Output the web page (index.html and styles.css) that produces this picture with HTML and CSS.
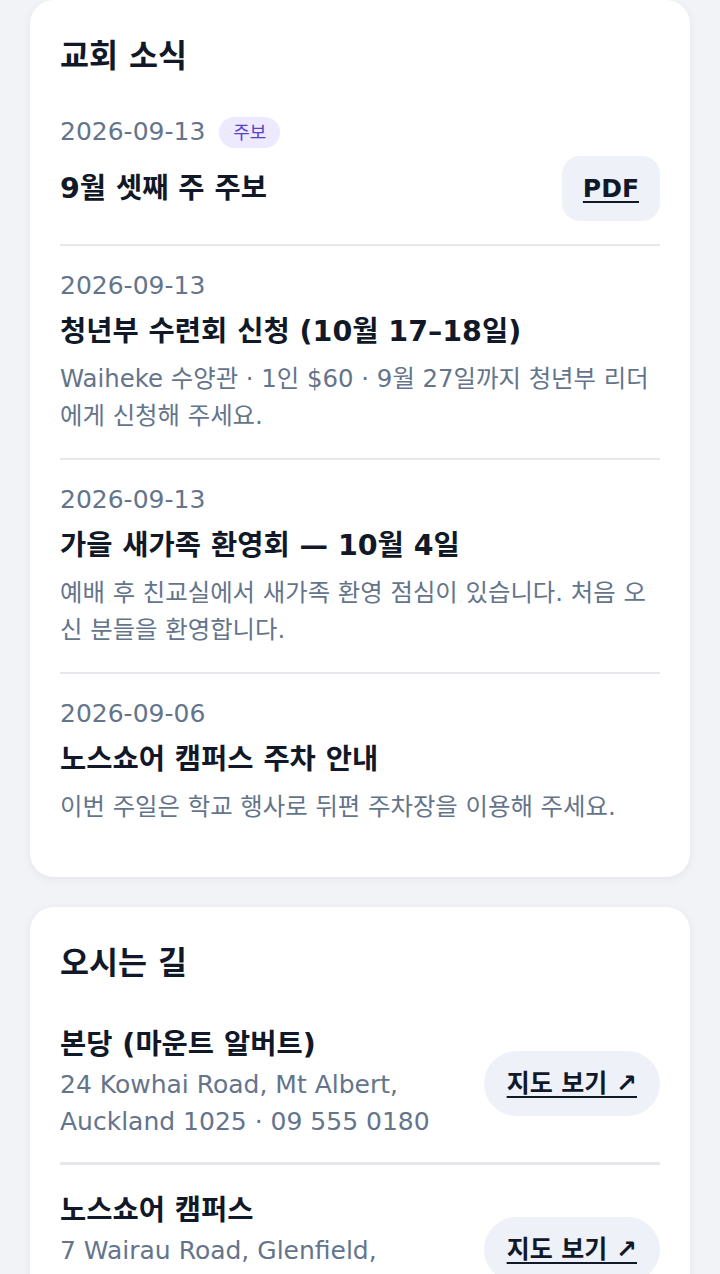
FILE: index.html
```html
<!DOCTYPE html>
<html lang="ko">
<head>
  <meta charset="UTF-8" />
  <title>교회 소식</title>
  <link rel="stylesheet" href="styles.css">
</head>
<body>
  <main class="page">
    <section class="card">
      <h2 class="card-title">교회 소식</h2>
      <ul class="news">
        <li class="news-item">
          <div class="news-meta">
            <span class="date">2026-09-13</span>
            <span class="tag">주보</span>
          </div>
          <div class="news-row">
            <h3 class="news-title">9월 셋째 주 주보</h3>
            <a class="btn" href="#">PDF</a>
          </div>
        </li>
        <li class="news-item">
          <div class="news-meta"><span class="date">2026-09-13</span></div>
          <h3 class="news-title">청년부 수련회 신청 (10월 17–18일)</h3>
          <p class="news-text">Waiheke 수양관 · 1인 $60 · 9월 27일까지 청년부 리더에게 신청해 주세요.</p>
        </li>
        <li class="news-item">
          <div class="news-meta"><span class="date">2026-09-13</span></div>
          <h3 class="news-title">가을 새가족 환영회 — 10월 4일</h3>
          <p class="news-text">예배 후 친교실에서 새가족 환영 점심이 있습니다. 처음 오신 분들을 환영합니다.</p>
        </li>
        <li class="news-item">
          <div class="news-meta"><span class="date">2026-09-06</span></div>
          <h3 class="news-title">노스쇼어 캠퍼스 주차 안내</h3>
          <p class="news-text">이번 주일은 학교 행사로 뒤편 주차장을 이용해 주세요.</p>
        </li>
      </ul>
    </section>

    <section class="card">
      <h2 class="card-title">오시는 길</h2>
      <ul class="places">
        <li class="place">
          <div class="place-info">
            <h3 class="place-name">본당 (마운트 알버트)</h3>
            <p class="place-addr">24 Kowhai Road, Mt Albert, Auckland 1025 · 09 555 0180</p>
          </div>
          <a class="btn btn-pill" href="#">지도 보기 ↗</a>
        </li>
        <li class="place">
          <div class="place-info">
            <h3 class="place-name">노스쇼어 캠퍼스</h3>
            <p class="place-addr">7 Wairau Road, Glenfield, Auckland 0629 · 09 555 0420</p>
          </div>
          <a class="btn btn-pill" href="#">지도 보기 ↗</a>
        </li>
      </ul>
    </section>
  </main>
</body>
</html>
```

FILE: styles.css
```css
body {
  margin: 0;
  background: #f1f3f7;
  font-family: "DejaVu Sans", "Noto Sans CJK KR", sans-serif;
  color: #111827;
}

.page {
  padding: 0 30px 30px;
  display: flex;
  flex-direction: column;
  gap: 30px;
}

.card {
  background: #fff;
  border-radius: 24px;
  padding: 34px 30px 28px;
  box-shadow: 0 2px 10px rgba(15, 23, 42, 0.06);
}

.card-title {
  margin: 0 0 14px;
  font-size: 31.5px;
  line-height: 44px;
  font-weight: 700;
}

ul {
  list-style: none;
  margin: 0;
  padding: 0;
}

.news-item {
  padding: 22px 0 24px;
  border-bottom: 2px solid #e5e7eb;
}

.news-item:first-child {
  padding-bottom: 23px;
}

.news-item:last-child {
  border-bottom: none;
}

.news-meta {
  display: flex;
  align-items: center;
  gap: 14px;
}

.date {
  font-size: 25px;
  line-height: 36px;
  color: #64748b;
}

.tag {
  background: #ede9fe;
  color: #5b3fc4;
  font-size: 18px;
  line-height: 31px;
  padding: 0 14px;
  border-radius: 16px;
}

.news-row {
  display: flex;
  justify-content: space-between;
  align-items: center;
  margin-top: 6px;
}

.news-title {
  margin: 10px 0 0;
  font-size: 28.5px;
  line-height: 36px;
  font-weight: 700;
}

.news-row .news-title {
  margin: 0;
}

.news-text {
  margin: 10px 0 0;
  font-size: 24.4px;
  line-height: 37px;
  color: #64748b;
}

.btn {
  flex: none;
  background: #eef1f7;
  color: #111827;
  font-size: 25px;
  line-height: 36px;
  font-weight: 700;
  text-decoration: underline;
  text-decoration-thickness: 2px;
  text-underline-offset: 4px;
  padding: 15px 21px 14px;
  border-radius: 18px;
}

.btn-pill {
  border-radius: 999px;
  padding: 15px 23px 14px;
}

.place {
  display: flex;
  align-items: center;
  gap: 20px;
  padding: 28px 0 22px;
  border-bottom: 3px solid #e5e7eb;
}

.place:last-child {
  border-bottom: none;
}

.place-info {
  flex: 1;
}

.place-name {
  margin: 0 0 3px;
  font-size: 28.5px;
  line-height: 36px;
  font-weight: 700;
}

.place-addr {
  margin: 0;
  font-size: 25px;
  line-height: 37px;
  color: #64748b;
}
```
